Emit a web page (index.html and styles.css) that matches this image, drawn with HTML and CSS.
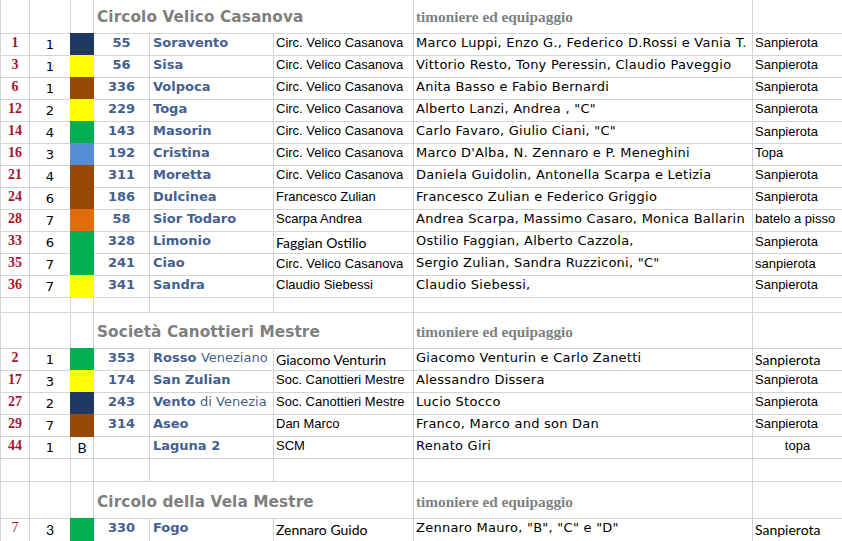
FILE: index.html
```html
<!DOCTYPE html>
<html lang="it">
<head>
<meta charset="utf-8">
<title>Regata</title>
<link rel="stylesheet" href="styles.css">
</head>
<body>
<div class="sheet">
  <!-- header 1 -->
  <div class="c"></div><div class="c"></div><div class="c"></div>
  <div class="c h title span3">Circolo Velico Casanova</div>
  <div class="c h sub">timoniere ed equipaggio</div>
  <div class="c"></div>

  <div class="c rk">1</div><div class="c n2">1</div><div class="c sw navy"></div><div class="c sn">55</div><div class="c bn">Soravento</div><div class="c ar">Circ. Velico Casanova</div><div class="c vd">Marco Luppi, Enzo G., Federico D.Rossi e Vania T.</div><div class="c ar">Sanpierota</div>
  <div class="c rk">3</div><div class="c n2">1</div><div class="c sw yel"></div><div class="c sn">56</div><div class="c bn">Sisa</div><div class="c ar">Circ. Velico Casanova</div><div class="c vd">Vittorio Resto, Tony Peressin, Claudio Paveggio</div><div class="c ar">Sanpierota</div>
  <div class="c rk">6</div><div class="c n2">1</div><div class="c sw brn"></div><div class="c sn">336</div><div class="c bn">Volpoca</div><div class="c ar">Circ. Velico Casanova</div><div class="c vd">Anita Basso e Fabio Bernardi</div><div class="c ar">Sanpierota</div>
  <div class="c rk">12</div><div class="c n2">2</div><div class="c sw yel"></div><div class="c sn">229</div><div class="c bn">Toga</div><div class="c ar">Circ. Velico Casanova</div><div class="c vd">Alberto Lanzi, Andrea , "C"</div><div class="c ar">Sanpierota</div>
  <div class="c rk">14</div><div class="c n2">4</div><div class="c sw grn"></div><div class="c sn">143</div><div class="c bn">Masorin</div><div class="c ar">Circ. Velico Casanova</div><div class="c vd">Carlo Favaro, Giulio Ciani, "C"</div><div class="c ar low">Sanpierota</div>
  <div class="c rk">16</div><div class="c n2">3</div><div class="c sw blu"></div><div class="c sn">192</div><div class="c bn">Cristina</div><div class="c ar">Circ. Velico Casanova</div><div class="c vd">Marco D'Alba, N. Zennaro e P. Meneghini</div><div class="c ar">Topa</div>
  <div class="c rk">21</div><div class="c n2">4</div><div class="c sw brn"></div><div class="c sn">311</div><div class="c bn">Moretta</div><div class="c ar">Circ. Velico Casanova</div><div class="c vd">Daniela Guidolin, Antonella Scarpa e Letizia</div><div class="c ar">Sanpierota</div>
  <div class="c rk">24</div><div class="c n2">6</div><div class="c sw brn"></div><div class="c sn">186</div><div class="c bn">Dulcinea</div><div class="c ar">Francesco Zulian</div><div class="c vd">Francesco Zulian e Federico Griggio</div><div class="c ar">Sanpierota</div>
  <div class="c rk">28</div><div class="c n2">7</div><div class="c sw org"></div><div class="c sn">58</div><div class="c bn">Sior Todaro</div><div class="c ar">Scarpa Andrea</div><div class="c vd">Andrea Scarpa, Massimo Casaro, Monica Ballarin</div><div class="c ar">batelo a pisso</div>
  <div class="c rk">33</div><div class="c n2">6</div><div class="c sw grn"></div><div class="c sn">328</div><div class="c bn">Limonio</div><div class="c cal">Faggian Ostilio</div><div class="c vd">Ostilio Faggian, Alberto Cazzola,</div><div class="c ar low">Sanpierota</div>
  <div class="c rk">35</div><div class="c n2">7</div><div class="c sw grn"></div><div class="c sn">241</div><div class="c bn">Ciao</div><div class="c ar low">Circ. Velico Casanova</div><div class="c vd">Sergio Zulian, Sandra Ruzziconi, "C"</div><div class="c ar low">sanpierota</div>
  <div class="c rk">36</div><div class="c n2">7</div><div class="c sw yel"></div><div class="c sn">341</div><div class="c bn">Sandra</div><div class="c ar">Claudio Siebessi</div><div class="c vd">Claudio Siebessi,</div><div class="c ar">Sanpierota</div>

  <!-- empty -->
  <div class="c"></div><div class="c"></div><div class="c"></div><div class="c"></div><div class="c"></div><div class="c"></div><div class="c"></div><div class="c"></div>

  <!-- header 2 -->
  <div class="c"></div><div class="c"></div><div class="c"></div>
  <div class="c h title span3">Società Canottieri Mestre</div>
  <div class="c h sub">timoniere ed equipaggio</div>
  <div class="c"></div>

  <div class="c rk">2</div><div class="c n2">1</div><div class="c sw grn"></div><div class="c sn">353</div><div class="c bn">Rosso <span class="reg">Veneziano</span></div><div class="c cal">Giacomo Venturin</div><div class="c vd">Giacomo Venturin e Carlo Zanetti</div><div class="c cal">Sanpierota</div>
  <div class="c rk">17</div><div class="c n2">3</div><div class="c sw yel"></div><div class="c sn">174</div><div class="c bn">San Zulian</div><div class="c ar">Soc. Canottieri Mestre</div><div class="c vd">Alessandro Dissera</div><div class="c ar">Sanpierota</div>
  <div class="c rk">27</div><div class="c n2">2</div><div class="c sw navy"></div><div class="c sn">243</div><div class="c bn">Vento <span class="reg">di Venezia</span></div><div class="c ar">Soc. Canottieri Mestre</div><div class="c vd">Lucio Stocco</div><div class="c ar">Sanpierota</div>
  <div class="c rk">29</div><div class="c n2">7</div><div class="c sw brn"></div><div class="c sn">314</div><div class="c bn">Aseo</div><div class="c ar">Dan Marco</div><div class="c vd">Franco, Marco and son Dan</div><div class="c ar">Sanpierota</div>
  <div class="c rk">44</div><div class="c n2">1</div><div class="c cal mid">B</div><div class="c sn"></div><div class="c bn">Laguna 2</div><div class="c ar">SCM</div><div class="c vd">Renato Giri</div><div class="c ar mid">topa</div>

  <!-- empty -->
  <div class="c"></div><div class="c"></div><div class="c"></div><div class="c"></div><div class="c"></div><div class="c"></div><div class="c"></div><div class="c"></div>

  <!-- header 3 -->
  <div class="c"></div><div class="c"></div><div class="c"></div>
  <div class="c h title span3">Circolo della Vela Mestre</div>
  <div class="c h sub">timoniere ed equipaggio</div>
  <div class="c"></div>

  <div class="c rk thin">7</div><div class="c n2 cal mid">3</div><div class="c sw grn"></div><div class="c sn">330</div><div class="c bn">Fogo</div><div class="c cal">Zennaro Guido</div><div class="c vd">Zennaro Mauro, "B", "C" e "D"</div><div class="c cal">Sanpierota</div>
</div>
</body>
</html>
```
FILE: styles.css
```css
html, body {
  margin: 0;
  padding: 0;
  background: #ffffff;
  overflow: hidden;
}
.sheet {
  width: 842px;
  display: grid;
  grid-template-columns: 28px 40px 22px 55px 123px 139px 338px 89px;
  grid-template-rows: 33px repeat(12, 21px) 14px 35px repeat(5, 21px) 22px 36px 22px;
  gap: 1px;
  padding-left: 1px;
  box-sizing: border-box;
  background: #d4d4d4;
  font-family: "DejaVu Sans", Verdana, sans-serif;
  font-size: 13px;
  color: #000;
}
.c {
  background: #fff;
  white-space: nowrap;
  overflow: hidden;
  padding: 0 2px;
  line-height: 17px;
  min-width: 0;
}
.span3 {
  grid-column: span 3;
}
.h {
  display: flex;
  align-items: flex-end;
  padding-bottom: 7px;
  line-height: 18px;
}
.title {
  font-family: "DejaVu Sans", Verdana, sans-serif;
  font-weight: bold;
  font-size: 15.3px;
  color: #7f7f7f;
  padding-left: 3px;
  letter-spacing: 0.1px;
}
.sub {
  font-family: "Liberation Serif", "Times New Roman", serif;
  font-weight: bold;
  font-size: 15.3px;
  color: #7f7f7f;
}
.rk {
  font-family: "Liberation Serif", "Times New Roman", serif;
  font-weight: bold;
  font-size: 14px;
  color: #a3172d;
  text-align: center;
  padding: 0;
}
.rk.thin {
  font-weight: normal;
}
.n2 {
  text-align: center;
  line-height: 21px;
}
.sw {
  position: relative;
}
.navy { background: #1f3864; box-shadow: 0 0 0 1px #1f3864; }
.yel  { background: #ffff00; box-shadow: 0 0 0 1px #ffff00; }
.brn  { background: #984807; box-shadow: 0 0 0 1px #984807; }
.grn  { background: #00b050; box-shadow: 0 0 0 1px #00b050; }
.blu  { background: #558ed5; box-shadow: 0 0 0 1px #558ed5; }
.org  { background: #e36c0a; box-shadow: 0 0 0 1px #e36c0a; }
.sn {
  font-weight: bold;
  color: #44608f;
  text-align: center;
}
.bn {
  font-weight: bold;
  color: #44608f;
  padding-left: 3px;
}
.bn .reg {
  font-weight: normal;
}
.ar {
  font-family: "Liberation Sans", Arial, sans-serif;
  font-size: 13px;
}
.vd {
  font-family: "DejaVu Sans", Verdana, sans-serif;
  letter-spacing: 0.25px;
}
.cal {
  font-family: Lato, "Noto Sans", sans-serif;
  font-size: 14px;
  line-height: 21px;
}
.low {
  line-height: 20px;
}
.mid {
  text-align: center;
}
```
